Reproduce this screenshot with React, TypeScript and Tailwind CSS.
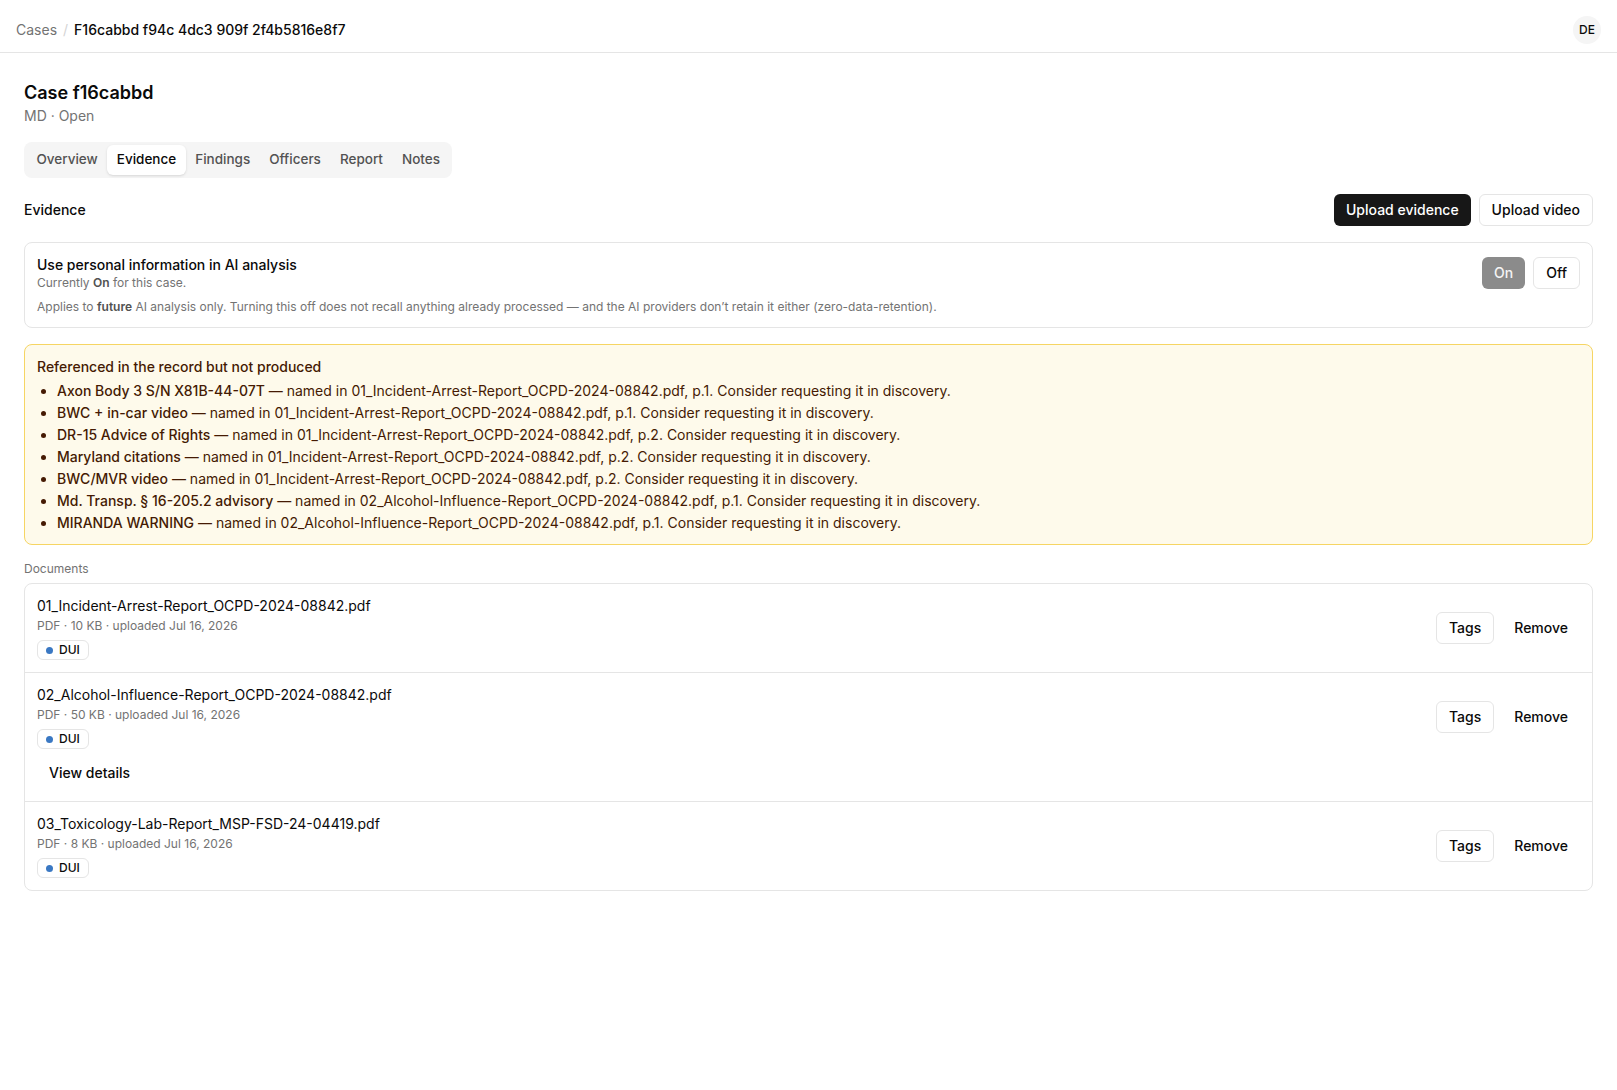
import * as React from "react";

const missing = [
  { name: "Axon Body 3 S/N X81B-44-07T", file: "01_Incident-Arrest-Report_OCPD-2024-08842.pdf", page: "p.1" },
  { name: "BWC + in-car video", file: "01_Incident-Arrest-Report_OCPD-2024-08842.pdf", page: "p.1" },
  { name: "DR-15 Advice of Rights", file: "01_Incident-Arrest-Report_OCPD-2024-08842.pdf", page: "p.2" },
  { name: "Maryland citations", file: "01_Incident-Arrest-Report_OCPD-2024-08842.pdf", page: "p.2" },
  { name: "BWC/MVR video", file: "01_Incident-Arrest-Report_OCPD-2024-08842.pdf", page: "p.2" },
  { name: "Md. Transp. § 16-205.2 advisory", file: "02_Alcohol-Influence-Report_OCPD-2024-08842.pdf", page: "p.1" },
  { name: "MIRANDA WARNING", file: "02_Alcohol-Influence-Report_OCPD-2024-08842.pdf", page: "p.1" },
];

const documents = [
  { name: "01_Incident-Arrest-Report_OCPD-2024-08842.pdf", size: "10 KB", details: false },
  { name: "02_Alcohol-Influence-Report_OCPD-2024-08842.pdf", size: "50 KB", details: true },
  { name: "03_Toxicology-Lab-Report_MSP-FSD-24-04419.pdf", size: "8 KB", details: false },
];

const tabs = ["Overview", "Evidence", "Findings", "Officers", "Report", "Notes"];

export default function App() {
  const [tab, setTab] = React.useState("Evidence");
  const [usePii, setUsePii] = React.useState(true);

  return (
    <div className="min-h-screen bg-white font-['Inter',sans-serif] text-sm text-[#0a0a0a]">
      <header className="flex h-[53px] items-center justify-between border-b border-[#e5e5e5] px-4 pt-[8px]">
        <nav className="flex items-center gap-1.5 text-sm">
          <span className="text-[#737373]">Cases</span>
          <span className="text-[#d4d4d4]">/</span>
          <span className="font-medium">F16cabbd f94c 4dc3 909f 2f4b5816e8f7</span>
        </nav>
        <div className="flex size-7 items-center justify-center rounded-full bg-[#f5f5f5] text-xs font-medium">
          DE
        </div>
      </header>

      <main className="px-6 pt-[26px]">
        <h1 className="text-lg font-semibold leading-7">Case f16cabbd</h1>
        <p className="-mt-px text-sm leading-5 text-[#737373]">MD · Open</p>

        <div className="mt-4 inline-flex h-9 items-center rounded-lg bg-[#f5f5f5] p-[3px]">
          {tabs.map((t) => (
            <button
              key={t}
              onClick={() => setTab(t)}
              className={
                t === tab
                  ? "h-[30px] rounded-md bg-white px-[9.5px] text-[13.5px] font-medium text-[#0a0a0a] shadow-sm"
                  : "h-[30px] rounded-md px-[9.5px] text-[13.5px] font-medium text-[#525252]"
              }
            >
              {t}
            </button>
          ))}
        </div>

        <div className="mt-4 flex items-center justify-between">
          <h2 className="font-medium">Evidence</h2>
          <div className="flex gap-2">
            <button className="h-8 rounded-md bg-[#171717] px-3 font-medium text-white">Upload evidence</button>
            <button className="h-8 rounded-md border border-[#e5e5e5] bg-white px-3 font-medium">Upload video</button>
          </div>
        </div>

        <section className="mt-4 rounded-lg border border-[#e5e5e5] px-3 py-3">
          <div className="flex items-center justify-between">
            <div>
              <p className="font-medium leading-5">Use personal information in AI analysis</p>
              <p className="text-xs leading-4 text-[#737373]">
                Currently <span className="font-semibold text-[#525252]">{usePii ? "On" : "Off"}</span> for this case.
              </p>
            </div>
            <div className="flex gap-2">
              <button
                onClick={() => setUsePii(true)}
                className={
                  usePii
                    ? "h-8 rounded-md bg-[#8b8b8b] px-3 font-medium text-[#f5f5f5]"
                    : "h-8 rounded-md border border-[#e5e5e5] bg-white px-3 font-medium"
                }
              >
                On
              </button>
              <button
                onClick={() => setUsePii(false)}
                className={
                  usePii
                    ? "h-8 rounded-md border border-[#e5e5e5] bg-white px-3 font-medium"
                    : "h-8 rounded-md bg-[#8b8b8b] px-3 font-medium text-[#f5f5f5]"
                }
              >
                Off
              </button>
            </div>
          </div>
          <p className="mt-2 text-xs leading-4 text-[#737373]">
            Applies to <span className="font-semibold text-[#525252]">future</span> AI analysis only. Turning this off
            does not recall anything already processed — and the AI providers don’t retain it either
            (zero-data-retention).
          </p>
        </section>

        <section className="mt-4 rounded-lg border border-[#f6d563] bg-[#fefaeb] px-3 pb-[11px] pt-3 text-[#451a03]">
          <p className="font-medium leading-5">Referenced in the record but not produced</p>
          <ul className="mt-1 list-disc space-y-0.5 pl-5">
            {missing.map((m) => (
              <li key={m.name} className="leading-5">
                <span className="font-medium">{m.name}</span> — named in {m.file}, {m.page}. Consider requesting it in
                discovery.
              </li>
            ))}
          </ul>
        </section>

        <p className="mt-4 text-xs leading-4 text-[#737373]">Documents</p>
        <div className="mt-1.5 divide-y divide-[#e5e5e5] rounded-lg border border-[#e5e5e5]">
          {documents.map((d) => (
            <div key={d.name} className="px-3 py-3">
              <div className="flex items-center justify-between">
                <div>
                  <p className="leading-5">{d.name}</p>
                  <p className="mt-0.5 text-xs leading-4 text-[#737373]">PDF · {d.size} · uploaded Jul 16, 2026</p>
                  <span className="mt-1.5 inline-flex h-5 items-center gap-1.5 rounded-md border border-[#e5e5e5] px-2 text-xs font-medium">
                    <span className="size-[7px] rounded-full bg-[#3a78c3]" />
                    DUI
                  </span>
                </div>
                <div className="flex items-center gap-2">
                  <button className="h-8 rounded-md border border-[#e5e5e5] bg-white px-3 font-medium">Tags</button>
                  <button className="h-8 rounded-md px-3 font-medium">Remove</button>
                </div>
              </div>
              {d.details && (
                <button className="mt-2 h-8 rounded-md px-3 font-medium">View details</button>
              )}
            </div>
          ))}
        </div>
      </main>
    </div>
  );
}
